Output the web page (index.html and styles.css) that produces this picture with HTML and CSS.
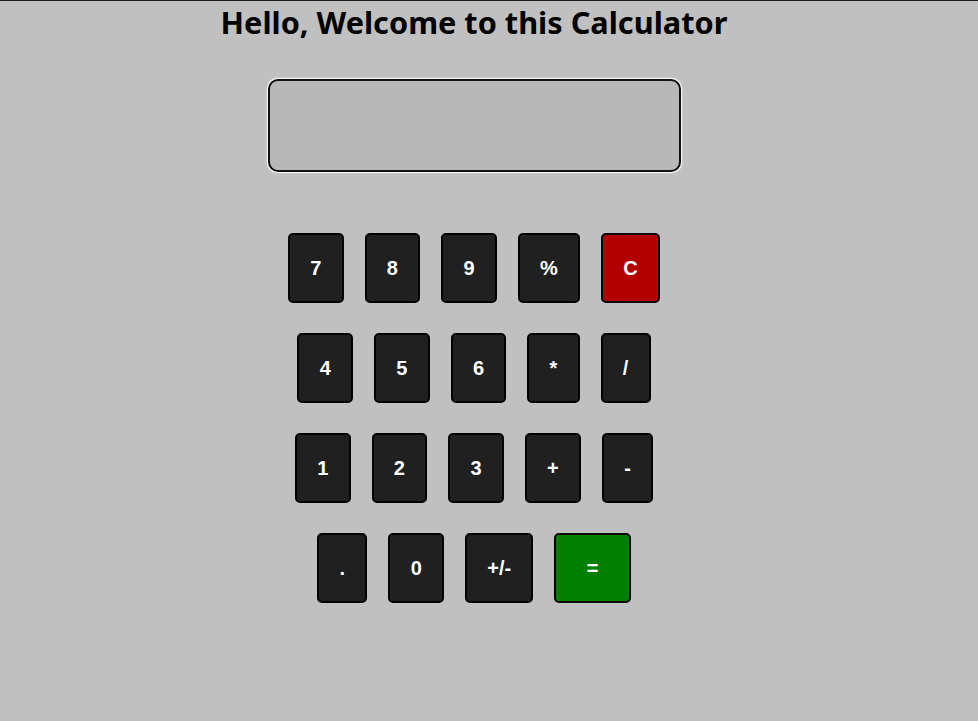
FILE: index.html
```html
<!DOCTYPE html>
<html lang="en">
<head>
<meta charset="utf-8">
<title>Calculator</title>
<link rel="stylesheet" href="styles.css">
</head>
<body>
<div class="page">
  <h1 class="title">Hello, Welcome to this Calculator</h1>
  <div class="display"></div>
  <div class="keys">
    <div class="row">
      <button class="key">7</button>
      <button class="key">8</button>
      <button class="key">9</button>
      <button class="key">%</button>
      <button class="key key-clear">C</button>
    </div>
    <div class="row">
      <button class="key">4</button>
      <button class="key">5</button>
      <button class="key">6</button>
      <button class="key">*</button>
      <button class="key">/</button>
    </div>
    <div class="row">
      <button class="key">1</button>
      <button class="key">2</button>
      <button class="key">3</button>
      <button class="key">+</button>
      <button class="key">-</button>
    </div>
    <div class="row">
      <button class="key">.</button>
      <button class="key">0</button>
      <button class="key">+/-</button>
      <button class="key key-equals">=</button>
    </div>
  </div>
</div>
</body>
</html>
```
FILE: styles.css
```css
html, body {
  margin: 0;
  padding: 0;
  background: #c0c0c0;
}
body {
  border-top: 1px solid #1a1a1a;
  min-height: 720px;
  font-family: "Liberation Sans", Arial, sans-serif;
}
.page {
  width: 948px;
  display: flex;
  flex-direction: column;
  align-items: center;
}
.title {
  margin: 0;
  font-family: "Noto Sans", "DejaVu Sans", sans-serif;
  font-weight: 700;
  font-size: 30.7px;
  line-height: 42px;
  color: #000;
  text-align: center;
}
.display {
  margin-top: 36px;
  width: 413px;
  height: 93px;
  box-sizing: border-box;
  border: 2px solid #111;
  border-radius: 10px;
  background: #b8b8b8;
  box-shadow: 0 0 1.5px 0.5px #fff;
}
.keys {
  margin-top: 61px;
  display: flex;
  flex-direction: column;
  align-items: center;
  gap: 30px;
}
.row {
  display: flex;
  gap: 21px;
}
.key {
  height: 70px;
  padding: 0 20.25px;
  border: 2px solid #000;
  border-radius: 5px;
  background: #202020;
  color: #fff;
  font-family: "Liberation Sans", Arial, sans-serif;
  font-weight: 700;
  font-size: 20px;
  line-height: 1;
  cursor: pointer;
}
.key-clear {
  background: #b30000;
}
.key-equals {
  background: #008000;
  padding: 0 30.25px;
}
```
